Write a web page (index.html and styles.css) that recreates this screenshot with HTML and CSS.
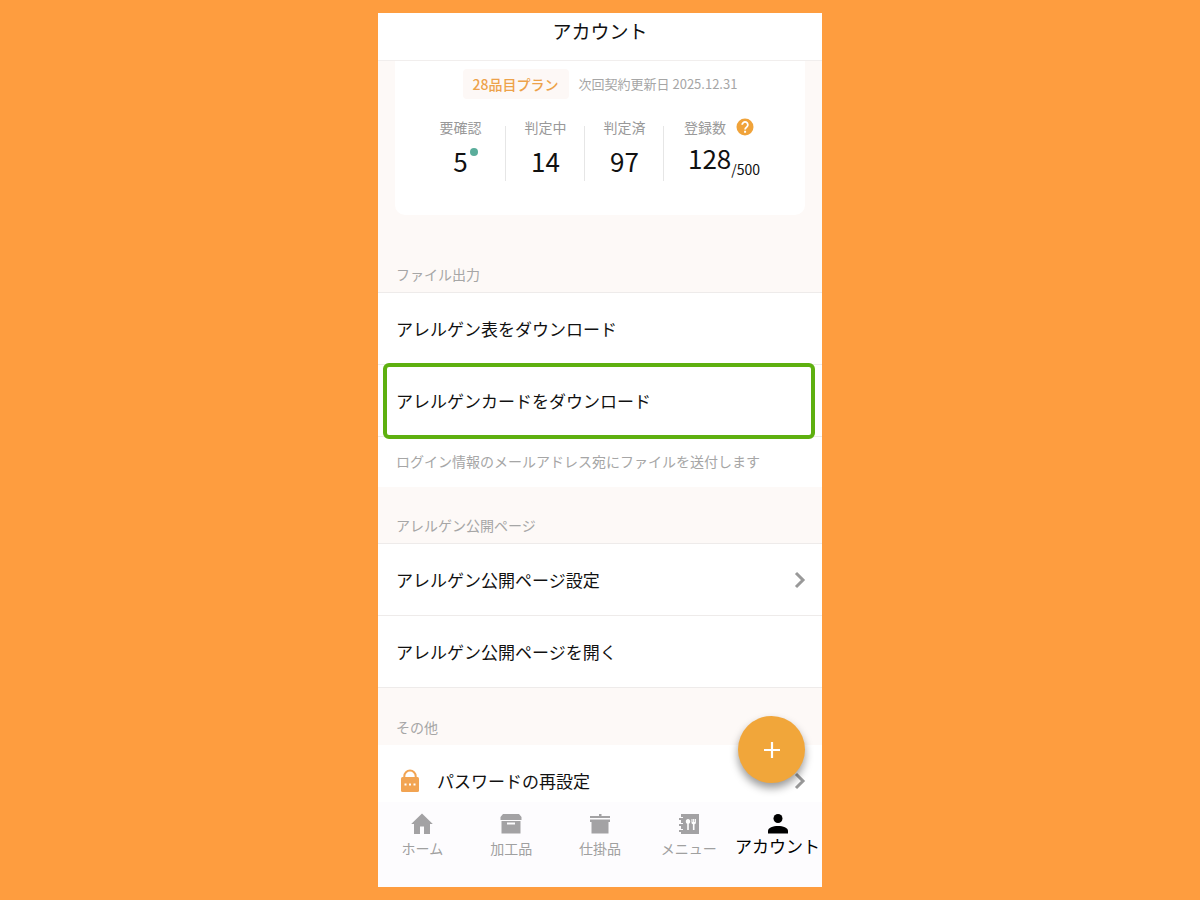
FILE: index.html
```html
<!DOCTYPE html>
<html lang="ja">
<head>
<meta charset="utf-8">
<meta name="viewport" content="width=device-width, initial-scale=1">
<title>アカウント</title>
<link rel="stylesheet" href="styles.css">
</head>
<body>
<div class="phone">
  <header class="topbar"><h1 class="title">アカウント</h1></header>
  <main class="content">
    <section class="card">
      <div class="plan">
        <span class="plan-name">28品目プラン</span>
        <span class="plan-date">次回契約更新日 2025.12.31</span>
      </div>
      <dl class="stats">
        <div class="stat"><dt>要確認</dt><dd><span class="flagged">5</span></dd></div>
        <div class="stat"><dt>判定中</dt><dd>14</dd></div>
        <div class="stat"><dt>判定済</dt><dd>97</dd></div>
        <div class="stat total">
          <dt>登録数
            <button class="help" type="button" aria-label="ヘルプ">
              <svg viewBox="0 0 24 24" width="20" height="20" aria-hidden="true"><circle cx="12" cy="12" r="10.200" fill="#f0a33a"/><path d="M8.600 9.400a3.400 3.400 0 1 1 5.600 2.500c-1.200 1-2.100 1.600-2.100 3.100" fill="none" stroke="#fff" stroke-width="2.200"/><path fill="#fff" d="M10.900 16.500h2.400v2.400h-2.400z"/></svg>
            </button>
          </dt>
          <dd>128<span class="limit">/500</span></dd>
        </div>
      </dl>
    </section>

    <section>
      <h2 class="group first">ファイル出力</h2>
      <button class="row" type="button">アレルゲン表をダウンロード</button>
      <button class="row selected" type="button">アレルゲンカードをダウンロード</button>
      <p class="note">ログイン情報のメールアドレス宛にファイルを送付します</p>
    </section>

    <section>
      <h2 class="group">アレルゲン公開ページ</h2>
      <a class="row" href="#settings">アレルゲン公開ページ設定
        <svg class="chevron" viewBox="0 0 12 18" width="12" height="18" aria-hidden="true"><path d="M2 2l7 7-7 7"/></svg>
      </a>
      <a class="row" href="#open">アレルゲン公開ページを開く</a>
    </section>

    <section>
      <h2 class="group plain">その他</h2>
      <a class="row last" href="#password">
        <svg class="lock" viewBox="0 0 20 24" width="20" height="24" aria-hidden="true"><path d="M4.300 9.500V7.200a5.700 5.700 0 0 1 11.400 0V9.500" fill="none" stroke="#f2a452" stroke-width="2"/><rect x="1" y="8" width="18" height="15" rx="1.500" fill="#f2a452"/><path d="M4.500 14.500h2v2h-2zM9 14.500h2v2H9zM13.500 14.500h2v2h-2z" fill="#fff"/></svg>
        パスワードの再設定
        <svg class="chevron" viewBox="0 0 12 18" width="12" height="18" aria-hidden="true"><path d="M2 2l7 7-7 7"/></svg>
      </a>
    </section>
  </main>

  <nav class="tabs">
    <a class="tab" href="#home">
      <svg viewBox="0 0 24 24" width="24" height="24" aria-hidden="true"><path d="M12 1.500L1.200 12H4v10h6V14.500h4V22h6V12h2.800z"/></svg>
      ホーム
    </a>
    <a class="tab" href="#processed">
      <svg viewBox="0 0 24 24" width="24" height="24" aria-hidden="true"><path d="M4 2h16l2.500 3v3h-21V5zM2.500 9h19v12.500h-19zM8 10.500v2h8v-2z" fill-rule="evenodd"/></svg>
      加工品
    </a>
    <a class="tab" href="#prepared">
      <svg viewBox="0 0 24 24" width="24" height="24" aria-hidden="true"><path d="M11 2h2.500v2H22v2H2V4h9zM2 7.500h20V10h-1.500v11.500h-17V10H2z"/></svg>
      仕掛品
    </a>
    <a class="tab" href="#menu">
      <svg viewBox="0 0 24 24" width="24" height="24" aria-hidden="true"><path d="M4 2h18v20H4v-2H2v-2h4v-1H4v-3H2v-2h4v-1H4V8H2V6h4V5H4z"/><path fill="#fff" d="M11 7c1.400 0 2.200 1.100 2.200 2.500 0 1.200-.6 2-1.400 2.300V18h-1.600v-6.200c-.8-.3-1.400-1.100-1.400-2.300C8.800 8.100 9.600 7 11 7zM14.500 7h1v3h.6V7h1.200v3h.6V7h1v3.500c0 1-.6 1.500-1.400 1.700V18h-1.600v-5.800c-.8-.2-1.400-.7-1.400-1.700z"/></svg>
      メニュー
    </a>
    <a class="tab active" href="#account" aria-current="page">
      <svg viewBox="0 0 24 24" width="24" height="24" aria-hidden="true"><circle cx="12" cy="6.500" r="4.500"/><path d="M2 21.500v-2.500c0-3.300 5-5 10-5s10 1.700 10 5v2.500z"/></svg>
      アカウント
    </a>
  </nav>
  <button class="fab" type="button" aria-label="追加">
    <svg viewBox="0 0 18 18" width="18" height="18" aria-hidden="true"><path d="M9 1v16M1 9h16" stroke="#fff" stroke-width="2.200"/></svg>
  </button>
</div>
</body>
</html>
```
FILE: styles.css
```css
* { box-sizing: border-box; }

body {
  margin: 0;
  padding: 13px 0;
  min-height: 100vh;
  display: flex;
  justify-content: center;
  background: #fe9d3f;
  color: #111;
  font-family: "Noto Sans CJK JP", sans-serif;
  font-size: 14px;
  line-height: 20px;
}

h1, h2, p, dl, dd { margin: 0; font-weight: 400; }
button { border: 0; padding: 0; background: none; color: inherit; font: inherit; cursor: pointer; }
a { color: inherit; text-decoration: none; }
svg { display: block; flex: none; }

.phone {
  position: relative;
  display: flex;
  flex-direction: column;
  width: 37%;
  min-width: 400px;
  background: #fdf9f7;
}

.topbar {
  padding: 4px 0 15px;
  background: #fff;
  border-bottom: 1px solid #f1eeed;
  text-align: center;
}
.title { font-size: 19px; line-height: 28px; }

.content { flex: 1; }

.card {
  margin: 0 17px;
  padding: 8px 20px 34px;
  background: #fff;
  border-radius: 0 0 10px 10px;
}
.plan { display: flex; justify-content: center; align-items: center; gap: 10px; }
.plan-name {
  padding: 5px 10px;
  background: #fdf8f6;
  border-radius: 4px;
  color: #eda24a;
  font-weight: 500;
}
.plan-date { color: #a6a6a6; font-size: 13px; }

.stats {
  display: grid;
  grid-template-columns: 91fr 79fr 79fr 121fr;
  margin-top: 18px;
  color: #999;
}
.stat {
  display: flex;
  flex-direction: column;
  align-items: center;
  gap: 8px;
  height: 64px;
  background: linear-gradient(#e6e6e6, #e6e6e6) right bottom / 1px 55px no-repeat;
}
.stat dd { color: #111; font-size: 26px; line-height: 32px; }
.stat.total { align-items: flex-start; gap: 5px; padding-left: 20px; background: none; }
.stat.total dt { display: flex; align-items: center; gap: 9px; }
.stat.total dd { padding-left: 4px; }
.flagged { position: relative; }
.flagged::after {
  content: "";
  position: absolute;
  left: 17px;
  top: 6px;
  width: 8px;
  height: 8px;
  border-radius: 50%;
  background: #5aad9b;
}
.limit { font-size: 14px; vertical-align: -6px; line-height: 16px; }

.group {
  padding: 28px 18px 8px;
  border-bottom: 1px solid #eeebea;
  color: #a6a6a6;
  font-size: 14px;
}
.group.first { padding-top: 49px; }
.group.plain { padding-top: 29px; border-bottom: 0; }

.row {
  position: relative;
  display: flex;
  align-items: center;
  width: 100%;
  padding: 24px 16px 23px 18px;
  background: #fff;
  border-bottom: 1px solid #eeebea;
  font-size: 17px;
  line-height: 24px;
  text-align: left;
}
.row.last { padding: 24px 16px 9px 22px; border-bottom: 0; }
.chevron { margin-left: auto; fill: none; stroke: #999; stroke-width: 3; }
.lock { margin-right: 17px; }

.selected::after {
  content: "";
  position: absolute;
  inset: -2px 7px -3px 5px;
  border: 4px solid #5eb010;
  border-radius: 6px;
}

.note { padding: 14px 18px 16px; background: #fff; color: #a6a6a6; font-size: 14px; }

.tabs { display: flex; padding: 10px 0 29px; background: #fdfcfe; }
.tab {
  flex: 1 1 0;
  min-width: 0;
  display: flex;
  flex-direction: column;
  align-items: center;
  gap: 2px;
  color: #a0a0a0;
  white-space: nowrap;
}
.tab svg { fill: #a3a2a4; }
.tab.active { gap: 0; color: #000; font-size: 17px; }
.tab.active svg { fill: #000; }

.fab {
  position: absolute;
  right: 17px;
  bottom: 104px;
  display: grid;
  place-items: center;
  width: 67px;
  height: 67px;
  border-radius: 50%;
  background: #f1a63a;
  box-shadow: 0 5px 9px rgba(0, 0, 0, 0.4);
}
```
